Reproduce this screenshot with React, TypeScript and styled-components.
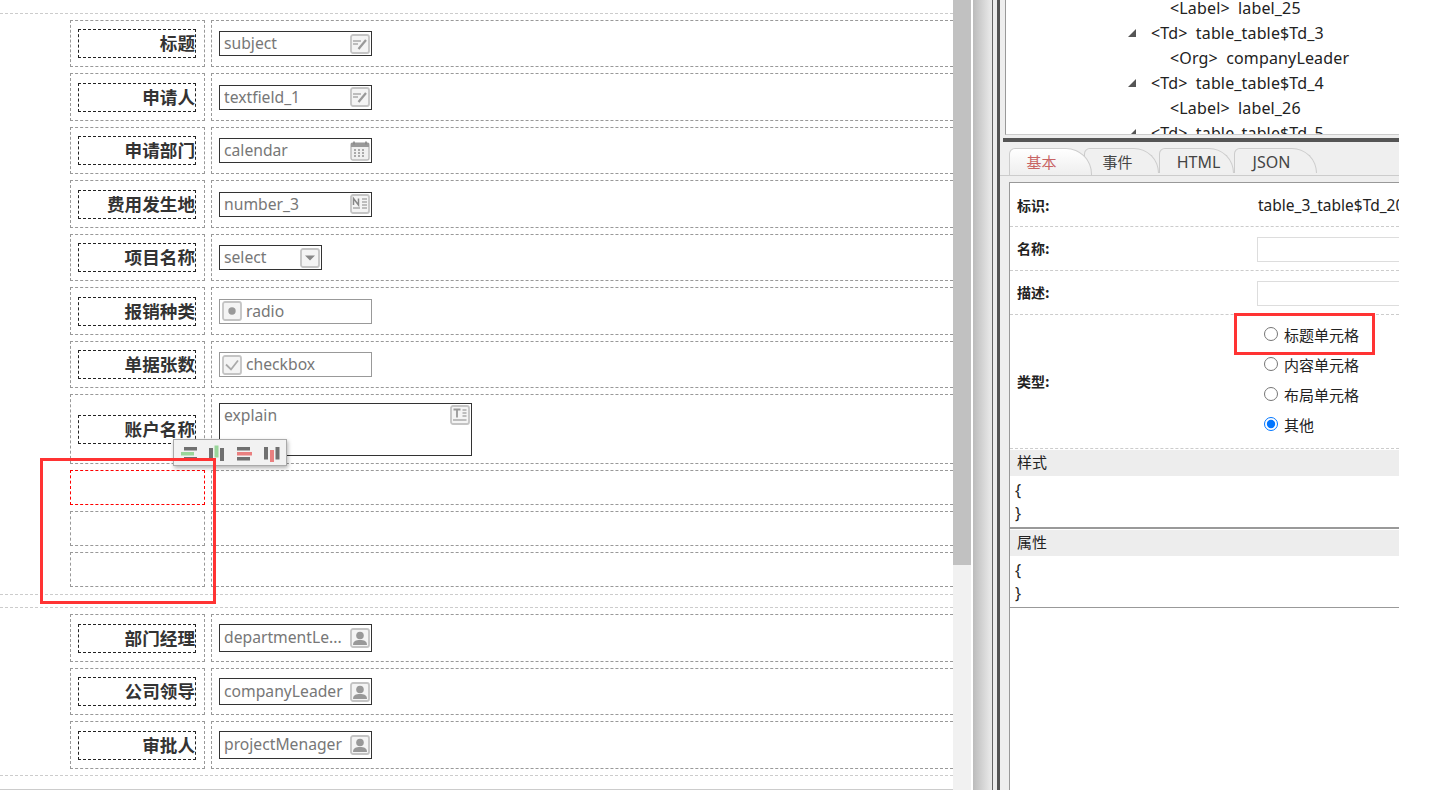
import React from "react";
import styled, { createGlobalStyle } from "styled-components";

const Global = createGlobalStyle`
  html, body { margin: 0; padding: 0; background: #fff; }
  body { font-family: "Noto Sans", "Noto Sans CJK SC", sans-serif; }
`;

const Page = styled.div`
  display: flex; width: 1446px; height: 790px; overflow: hidden; background: #fff;
`;
const Designer = styled.div`
  width: 953px; height: 790px; flex: none; overflow: hidden; padding-top: 13px; box-sizing: border-box;
  border-bottom: 1px solid #ccc;
`;
const Band = styled.div<{ $pb: number; $pt: number }>`
  border-top: 1px dashed #ccc;
  padding: ${(p) => p.$pt}px 0 ${(p) => p.$pb}px 70px;
`;
const EmptyBand = styled.div`
  height: 12px; border-top: 1px dashed #ccc;
`;
const Row = styled.div<{ $h: number; $gap?: number }>`
  display: grid; grid-template-columns: 135px 1fr; column-gap: 6px;
  height: ${(p) => p.$h}px; margin-bottom: ${(p) => p.$gap ?? 6}px;
`;
const LabelCell = styled.div<{ $red?: boolean }>`
  border: 1px dashed ${(p) => (p.$red ? "#f00" : "#999")};
  box-sizing: border-box; display: flex; align-items: center; padding: 0 8px 0 7px;
`;
const FieldCell = styled.div`
  border: 1px dashed #999; border-right: none; box-sizing: border-box;
  display: flex; align-items: center; padding-left: 7px;
`;
const LabelBox = styled.div`
  flex: 1; height: 29px; border: 1px dashed #222; box-sizing: border-box; padding-bottom: 2px;
  display: flex; align-items: center; justify-content: flex-end;
  font: 700 17.6px/25px "Noto Sans CJK SC", sans-serif; color: #333; white-space: nowrap;
`;
const Field = styled.div<{ $w?: number; $muted?: boolean; $h?: number }>`
  width: ${(p) => p.$w ?? 153}px; height: ${(p) => p.$h ?? 25}px; box-sizing: border-box;
  border: 1px solid ${(p) => (p.$muted ? "#999" : "#333")}; background: #fff;
  display: flex; align-items: center; padding: 0 1px 0 4px; gap: 4px;
  font-size: 15.7px; color: #777; white-space: nowrap;
`;
const MutedField = styled(Field)`
  padding-left: 2px;
`;
const AreaField = styled.div`
  width: 253px; height: 53px; box-sizing: border-box; border: 1px solid #333; margin-top: 1px;
  display: flex; justify-content: space-between; padding: 1px 1px 0 4px;
  font-size: 15.7px; line-height: 20px; color: #777;
`;
const FieldText = styled.span`
  flex: 1; min-width: 0; overflow: hidden; padding-bottom: 1px; line-height: 20px;
`;
const PersonText = styled(FieldText)`
  padding-bottom: 2px;
`;
const IconBox = styled.svg`
  width: 20px; height: 20px; flex: none; display: block;
`;
const Gripper = styled.div`
  width: 18px; flex: none; height: 790px; background: #f1f1f1;
`;
const Thumb = styled.div`
  height: 565px; background: #c1c1c1;
`;
const Splitter = styled.div`
  flex: none; width: 27px; height: 790px; margin-left: 2px; display: flex;
  background: #eee;
`;
const SplitGradient = styled.div`
  width: 19px; background: linear-gradient(to right, #bbb, #ececec);
  border-right: 1px solid #666;
`;
const SplitBar = styled.div`
  width: 3px; margin-left: 4px; background: #555;
`;
const Side = styled.div`
  width: 399px; flex: none; height: 790px; background: #eee; display: flex; flex-direction: column; overflow: hidden;
`;
const Tree = styled.div`
  height: 135px; flex: none; margin-left: 5px; background: #fff; border-left: 1px solid #999;
  border-bottom: 1px solid #ccc; box-sizing: border-box; overflow: hidden;
`;
const TreeList = styled.div`
  margin-top: -4px;
`;
const TreeRow = styled.div<{ $indent: number }>`
  height: 25px; line-height: 25px; font-size: 16px; letter-spacing: 0.15px; word-spacing: 4px; color: #222; white-space: nowrap;
  display: flex; align-items: center; padding-left: ${(p) => p.$indent}px;
`;
const Tri = styled.svg`
  width: 8px; height: 8px; margin-right: 15px; margin-top: -2px; flex: none;
`;
const DarkBar = styled.div`
  height: 4px; margin: 3px 0 0 3px; background: #555; flex: none;
`;
const TabBar = styled.div`
  height: 34px; flex: none; box-sizing: border-box; padding: 6px 0 0 9px; display: flex;
  border-bottom: 1px solid #ccc; background: #efefef;
`;
const Tab = styled.div<{ $w: number; $active?: boolean; $ml?: number; $pr?: number; $pl?: number; $fs?: number }>`
  width: ${(p) => p.$w}px; box-sizing: border-box; margin-left: ${(p) => p.$ml ?? 0}px;
  height: ${(p) => (p.$active ? 27 : 25)}px;
  border: 1px solid #ccc; border-bottom: none; border-radius: 6px 26px 0 0;
  background: ${(p) => (p.$active ? "linear-gradient(#fff, #eee)" : "#f0f0f0")};
  color: ${(p) => (p.$active ? "#c86464" : "#444")};
  position: relative; z-index: ${(p) => (p.$active ? 2 : 1)};
  font-size: ${(p) => p.$fs ?? 15}px; line-height: 27px; text-align: center;
  padding: 0 ${(p) => p.$pr ?? 8}px 0 ${(p) => p.$pl ?? 0}px;
`;
const Panel = styled.div`
  margin: 6px 0 0 9px; flex: 1; background: #fff; border-left: 1px solid #999; border-top: 1px solid #999;
`;
const PropRow = styled.div<{ $h: number }>`
  height: ${(p) => p.$h}px; box-sizing: border-box; border-bottom: 1px dashed #ccc;
  display: flex; align-items: center; padding-left: 7px;
`;
const PropName = styled.div<{ $lift?: boolean }>`
  width: 240px; flex: none; font: 700 14px "Noto Sans CJK SC", sans-serif; color: #222;
  margin-top: ${(p) => (p.$lift ? -2 : 0)}px;
`;
const PropValue = styled.div`
  font-size: 15.5px; margin-left: 1px; color: #222; white-space: nowrap;
`;
const PropInput = styled.input`
  width: 200px; height: 25px; box-sizing: border-box; border: 1px solid #ddd; flex: none; padding: 0; outline: none; margin-top: 1px;
`;
const RadioList = styled.div`
  display: flex; flex-direction: column; padding: 0 0 0 7px;
`;
const RadioLine = styled.label`
  height: 30px; box-sizing: border-box; padding-bottom: 4px; display: flex; align-items: center; font-size: 15px; color: #222; white-space: nowrap;
`;
const Radio = styled.input`
  width: 14px; height: 14px; margin: -2px 6px 0 0; flex: none;
`;
const SectionHead = styled.div`
  height: 26px; margin-top: 1px; background: #ededed; font-size: 15px; line-height: 25px; color: #222; padding-left: 7px;
`;
const Code = styled.div`
  height: 53px; padding: 3px 0 0 5px; box-sizing: border-box; border-bottom: 2px solid #999;
  font-size: 16px; line-height: 23px; color: #222;
`;
const CodeLast = styled(Code)`
  height: 52px; border-bottom-width: 1px;
`;
const Blank = styled.div`
  width: 47px; flex: none; background: #fff;
`;
const Toolbar = styled.div`
  position: absolute; left: 173px; top: 439px; width: 114px; height: 27px; box-sizing: border-box;
  background: #f2f2f2; border: 1px solid #aaa; box-shadow: 1px 2px 4px rgba(0,0,0,.3);
  display: flex; align-items: center; padding-left: 6px; gap: 7px;
`;
const RedMark = styled.div<{ $l: number; $t: number; $w: number; $h: number }>`
  position: absolute; left: ${(p) => p.$l}px; top: ${(p) => p.$t}px; width: ${(p) => p.$w}px; height: ${(p) => p.$h}px;
  box-sizing: border-box; border: 3px solid #f33; pointer-events: none;
`;

const Frame = () => <rect x="1" y="1" width="18" height="18" rx="2" fill="#f4f4f4" stroke="#c4c4c4" strokeWidth="1.8" />;
const EditIcon = () => (
  <IconBox viewBox="0 0 20 20"><Frame />
    <path d="M3 7h8M3 10h5" stroke="#aaa" strokeWidth="1.6" />
    <path d="M8.5 15l7.5-9" stroke="#999" strokeWidth="2.2" />
  </IconBox>
);
const CalIcon = () => (
  <IconBox viewBox="0 0 20 20">
    <rect x="1" y="2" width="18" height="17" rx="2" fill="#f0f0f0" stroke="#bbb" strokeWidth="1.4" />
    <rect x="1" y="2" width="18" height="4" fill="#999" />
    <path d="M4 0.5v3M16 0.5v3" stroke="#888" strokeWidth="1.6" />
    <path d="M4 9h12M4 12h12M4 15h12" stroke="#aaa" strokeWidth="2" strokeDasharray="2 2" />
  </IconBox>
);
const NumIcon = () => (
  <IconBox viewBox="0 0 20 20"><Frame />
    <path d="M3.5 11V4.5L8.5 11V4.5" fill="none" stroke="#888" strokeWidth="1.5" />
    <path d="M3 14h7M12 5h5M12 8h5M12 11h5M12 14h5" stroke="#aaa" strokeWidth="1.3" />
  </IconBox>
);
const ArrowIcon = () => (
  <IconBox viewBox="0 0 20 20"><Frame /><path d="M5 7.5h10L10 12.5z" fill="#888" /></IconBox>
);
const RadioIcon = () => (
  <IconBox viewBox="0 0 20 20"><Frame /><circle cx="10" cy="10" r="3.7" fill="#999" /></IconBox>
);
const CheckIcon = () => (
  <IconBox viewBox="0 0 20 20"><Frame /><path d="M4 9.5l5 5 7-9" fill="none" stroke="#aaa" strokeWidth="1.8" /></IconBox>
);
const TextIcon = () => (
  <IconBox viewBox="0 0 20 20"><Frame />
    <path d="M3.5 4.5h7M7 4.5v8" fill="none" stroke="#999" strokeWidth="1.8" />
    <path d="M12.5 5h4M12.5 8h4M12.5 11h4M3 15h13.5" stroke="#aaa" strokeWidth="1.3" />
  </IconBox>
);
const UserIcon = () => (
  <IconBox viewBox="0 0 20 20"><Frame />
    <circle cx="10" cy="7.500" r="3.800" fill="#999" />
    <path d="M3 17c0-3.800 3-5 7-5s7 1.200 7 5z" fill="#999" />
  </IconBox>
);
const AlignIcon = ({ kind }: { kind: number }) => {
  const green = "#9ad69a", red = "#ea8080", gray = "#707070";
  const shapes = [
    <g key="0"><rect x="4" y="4" width="13" height="3.500" fill={gray} /><rect x="1" y="9" width="13" height="3.500" fill={green} /><rect x="4" y="14" width="13" height="3.500" fill={gray} /></g>,
    <g key="1"><rect x="2" y="5" width="4" height="13" fill={gray} /><rect x="7.500" y="2.500" width="4" height="12" fill={green} /><rect x="13" y="5" width="4" height="13" fill={gray} /></g>,
    <g key="2"><rect x="3" y="4" width="13" height="3.500" fill={gray} /><rect x="3" y="9" width="15" height="3.500" fill={red} /><rect x="3" y="14" width="13" height="3.500" fill={gray} /></g>,
    <g key="3"><rect x="3" y="4" width="4" height="12.500" fill={gray} /><rect x="9" y="7" width="4" height="12" fill={red} /><rect x="14.500" y="4" width="4" height="12.500" fill={gray} /></g>,
  ];
  return <IconBox viewBox="0 0 20 20">{shapes[kind]}</IconBox>;
};
const Triangle = () => (
  <Tri viewBox="0 0 8 8"><polygon points="0,8 8,8 8,0" fill="#555" /></Tri>
);

const topRows = [
  { l: "标题", v: "subject", i: <EditIcon /> },
  { l: "申请人", v: "textfield_1", i: <EditIcon /> },
  { l: "申请部门", v: "calendar", i: <CalIcon /> },
  { l: "费用发生地", v: "number_3", i: <NumIcon /> },
];
const people = [
  { l: "部门经理", v: "departmentLe..." },
  { l: "公司领导", v: "companyLeader" },
  { l: "审批人", v: "projectMenager" },
];
const tree: [number, boolean, string][] = [
  [164, false, "<Label> label_25"],
  [122, true, "<Td> table_table$Td_3"],
  [164, false, "<Org> companyLeader"],
  [122, true, "<Td> table_table$Td_4"],
  [164, false, "<Label> label_26"],
  [122, true, "<Td> table_table$Td_5"],
];

export default function App() {
  return (
    <Page>
      <Global />
      <Designer>
        <Band $pt={5.75} $pb={7}>
          {topRows.map((r) => (
            <Row $h={47.5} key={r.l}>
              <LabelCell><LabelBox>{r.l}</LabelBox></LabelCell>
              <FieldCell>
                <Field><FieldText>{r.v}</FieldText>{r.i}</Field>
              </FieldCell>
            </Row>
          ))}
          <Row $h={47.5}>
            <LabelCell><LabelBox>项目名称</LabelBox></LabelCell>
            <FieldCell><Field $w={103}><FieldText>select</FieldText><ArrowIcon /></Field></FieldCell>
          </Row>
          <Row $h={47.5}>
            <LabelCell><LabelBox>报销种类</LabelBox></LabelCell>
            <FieldCell><MutedField $muted><RadioIcon /><FieldText>radio</FieldText></MutedField></FieldCell>
          </Row>
          <Row $h={47.5}>
            <LabelCell><LabelBox>单据张数</LabelBox></LabelCell>
            <FieldCell><MutedField $muted><CheckIcon /><FieldText>checkbox</FieldText></MutedField></FieldCell>
          </Row>
          <Row $h={69.5}>
            <LabelCell><LabelBox>账户名称</LabelBox></LabelCell>
            <FieldCell><AreaField><span>explain</span><TextIcon /></AreaField></FieldCell>
          </Row>
          <Row $h={35}><LabelCell $red /><FieldCell /></Row>
          <Row $h={35}><LabelCell /><FieldCell /></Row>
          <Row $h={35} $gap={0}><LabelCell /><FieldCell /></Row>
        </Band>
        <EmptyBand />
        <Band $pt={6.5} $pb={0}>
          {people.map((r) => (
            <Row $h={47.5} key={r.l}>
              <LabelCell><LabelBox>{r.l}</LabelBox></LabelCell>
              <FieldCell><Field $h={27.5}><PersonText>{r.v}</PersonText><UserIcon /></Field></FieldCell>
            </Row>
          ))}
        </Band>
        <EmptyBand />
      </Designer>
      <Gripper><Thumb /></Gripper>
      <Splitter>
        <SplitGradient />
        <SplitBar />
      </Splitter>
      <Side>
        <Tree>
          <TreeList>
            {tree.map(([x, t, s], i) => (
              <TreeRow $indent={x} key={i}>
                {t && <Triangle />}
                {s}
              </TreeRow>
            ))}
          </TreeList>
        </Tree>
        <DarkBar />
        <TabBar>
          <Tab $w={83} $active $pr={18}>基本</Tab>
          <Tab $w={75} $ml={-8}>事件</Tab>
          <Tab $w={75} $pr={0} $pl={4} $fs={16}>HTML</Tab>
          <Tab $w={83} $fs={16}>JSON</Tab>
        </TabBar>
        <Panel>
          <PropRow $h={44}><PropName>标识:</PropName><PropValue>table_3_table$Td_20</PropValue></PropRow>
          <PropRow $h={44}><PropName $lift>名称:</PropName><PropInput readOnly /></PropRow>
          <PropRow $h={44}><PropName $lift>描述:</PropName><PropInput readOnly /></PropRow>
          <PropRow $h={134}>
            <PropName $lift>类型:</PropName>
            <RadioList>
              <RadioLine><Radio type="radio" name="cell" />标题单元格</RadioLine>
              <RadioLine><Radio type="radio" name="cell" />内容单元格</RadioLine>
              <RadioLine><Radio type="radio" name="cell" />布局单元格</RadioLine>
              <RadioLine><Radio type="radio" name="cell" defaultChecked />其他</RadioLine>
            </RadioList>
          </PropRow>
          <SectionHead>样式</SectionHead>
          <Code>{"{"}<br />{"}"}</Code>
          <SectionHead>属性</SectionHead>
          <CodeLast>{"{"}<br />{"}"}</CodeLast>
        </Panel>
      </Side>
      <Blank />
      <Toolbar>
        <AlignIcon kind={0} /><AlignIcon kind={1} /><AlignIcon kind={2} /><AlignIcon kind={3} />
      </Toolbar>
      <RedMark $l={40} $t={458} $w={176} $h={146} />
      <RedMark $l={1234} $t={313} $w={141} $h={42} />
    </Page>
  );
}
